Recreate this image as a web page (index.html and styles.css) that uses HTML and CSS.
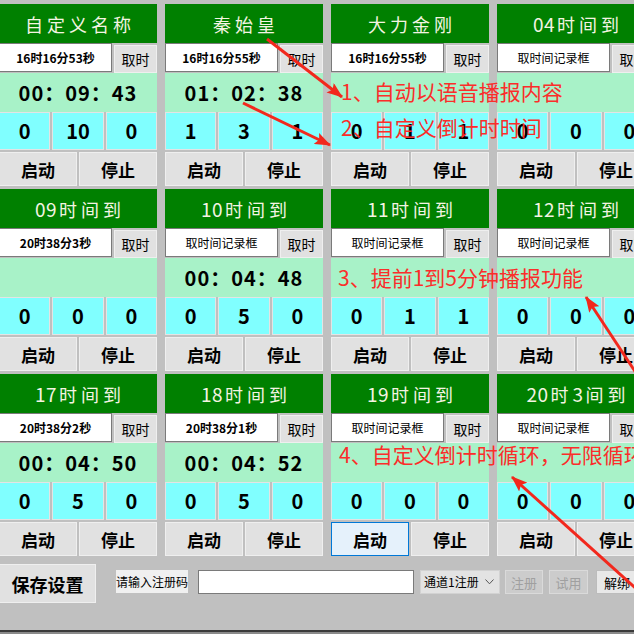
FILE: index.html
```html
<!DOCTYPE html>
<html lang="zh-CN">
<head>
<meta charset="utf-8">
<title>倒计时</title>
<link rel="stylesheet" href="styles.css">
</head>
<body>
<div class="app">
  <div class="grid">
    <div class="panel">
      <div class="hd">自定义名称</div>
      <div class="getrow"><div class="tbox val">16时16分53秒</div><div class="btn get">取时</div></div>
      <div class="time">00：09：43</div>
      <div class="nums"><div class="num">0</div><div class="num">10</div><div class="num">0</div></div>
      <div class="ctrl"><div class="btn">启动</div><div class="btn">停止</div></div>
    </div>
    <div class="panel">
      <div class="hd">秦始皇</div>
      <div class="getrow"><div class="tbox val">16时16分55秒</div><div class="btn get">取时</div></div>
      <div class="time">01：02：38</div>
      <div class="nums"><div class="num">1</div><div class="num">3</div><div class="num">1</div></div>
      <div class="ctrl"><div class="btn">启动</div><div class="btn">停止</div></div>
    </div>
    <div class="panel">
      <div class="hd">大力金刚</div>
      <div class="getrow"><div class="tbox val">16时16分55秒</div><div class="btn get">取时</div></div>
      <div class="time"></div>
      <div class="nums"><div class="num">0</div><div class="num">1</div><div class="num">1</div></div>
      <div class="ctrl"><div class="btn">启动</div><div class="btn">停止</div></div>
    </div>
    <div class="panel">
      <div class="hd"><span class="d">04</span>时间到</div>
      <div class="getrow"><div class="tbox">取时间记录框</div><div class="btn get">取时</div></div>
      <div class="time"></div>
      <div class="nums"><div class="num">0</div><div class="num">0</div><div class="num">0</div></div>
      <div class="ctrl"><div class="btn">启动</div><div class="btn">停止</div></div>
    </div>

    <div class="panel">
      <div class="hd"><span class="d">09</span>时间到</div>
      <div class="getrow"><div class="tbox val">20时38分3秒</div><div class="btn get">取时</div></div>
      <div class="time"></div>
      <div class="nums"><div class="num">0</div><div class="num">0</div><div class="num">0</div></div>
      <div class="ctrl"><div class="btn">启动</div><div class="btn">停止</div></div>
    </div>
    <div class="panel">
      <div class="hd"><span class="d">10</span>时间到</div>
      <div class="getrow"><div class="tbox">取时间记录框</div><div class="btn get">取时</div></div>
      <div class="time">00：04：48</div>
      <div class="nums"><div class="num">0</div><div class="num">5</div><div class="num">0</div></div>
      <div class="ctrl"><div class="btn">启动</div><div class="btn">停止</div></div>
    </div>
    <div class="panel">
      <div class="hd"><span class="d">11</span>时间到</div>
      <div class="getrow"><div class="tbox">取时间记录框</div><div class="btn get">取时</div></div>
      <div class="time"></div>
      <div class="nums"><div class="num">0</div><div class="num">1</div><div class="num">1</div></div>
      <div class="ctrl"><div class="btn">启动</div><div class="btn">停止</div></div>
    </div>
    <div class="panel">
      <div class="hd"><span class="d">12</span>时间到</div>
      <div class="getrow"><div class="tbox">取时间记录框</div><div class="btn get">取时</div></div>
      <div class="time"></div>
      <div class="nums"><div class="num">0</div><div class="num">0</div><div class="num">0</div></div>
      <div class="ctrl"><div class="btn">启动</div><div class="btn">停止</div></div>
    </div>

    <div class="panel">
      <div class="hd"><span class="d">17</span>时间到</div>
      <div class="getrow"><div class="tbox val">20时38分2秒</div><div class="btn get">取时</div></div>
      <div class="time">00：04：50</div>
      <div class="nums"><div class="num">0</div><div class="num">5</div><div class="num">0</div></div>
      <div class="ctrl"><div class="btn">启动</div><div class="btn">停止</div></div>
    </div>
    <div class="panel">
      <div class="hd"><span class="d">18</span>时间到</div>
      <div class="getrow"><div class="tbox val">20时38分1秒</div><div class="btn get">取时</div></div>
      <div class="time">00：04：52</div>
      <div class="nums"><div class="num">0</div><div class="num">5</div><div class="num">0</div></div>
      <div class="ctrl"><div class="btn">启动</div><div class="btn">停止</div></div>
    </div>
    <div class="panel">
      <div class="hd"><span class="d">19</span>时间到</div>
      <div class="getrow"><div class="tbox">取时间记录框</div><div class="btn get">取时</div></div>
      <div class="time"></div>
      <div class="nums"><div class="num">0</div><div class="num">0</div><div class="num">0</div></div>
      <div class="ctrl"><div class="btn focus">启动</div><div class="btn">停止</div></div>
    </div>
    <div class="panel">
      <div class="hd"><span class="d">20</span>时<span class="d">3</span>间到</div>
      <div class="getrow"><div class="tbox">取时间记录框</div><div class="btn get">取时</div></div>
      <div class="time"></div>
      <div class="nums"><div class="num">0</div><div class="num">0</div><div class="num">0</div></div>
      <div class="ctrl"><div class="btn">启动</div><div class="btn">停止</div></div>
    </div>
  </div>

  <div class="bar">
    <div class="btn save">保存设置</div>
    <div class="lbl">请输入注册码</div>
    <div class="reg"></div>
    <div class="sel"><span class="seltxt">通道1注册</span><svg class="chev" width="9" height="6" viewBox="0 0 9 6"><polyline points="0.5,0.5 4.5,4.8 8.5,0.5" fill="none" stroke="#555" stroke-width="1"/></svg></div>
    <div class="sbtn dis b1">注册</div>
    <div class="sbtn dis b2">试用</div>
    <div class="sbtn b3">解绑</div>
  </div>
  <div class="taskbar"></div>

  <div class="note n1">1、自动以语音播报内容</div>
  <div class="note n2">2、自定义倒计时时间</div>
  <div class="note n3">3、提前1到5分钟播报功能</div>
  <div class="note n4">4、自定义倒计时循环，无限循环</div>

  <svg class="arrows" width="634" height="634" viewBox="0 0 634 634">
    <defs>
      <marker id="ah" markerWidth="16" markerHeight="12" refX="15" refY="6" orient="auto" markerUnits="userSpaceOnUse">
        <path d="M0,0 L16,6 L0,12 L3,6 z" fill="#f2281d"/>
      </marker>
    </defs>
    <line x1="267" y1="39" x2="342" y2="97" stroke="#f2281d" stroke-width="3" marker-end="url(#ah)"/>
    <line x1="243" y1="103" x2="330" y2="145" stroke="#f2281d" stroke-width="3" marker-end="url(#ah)"/>
    <line x1="642" y1="382" x2="586" y2="297" stroke="#f2281d" stroke-width="3" marker-end="url(#ah)"/>
    <line x1="652" y1="603" x2="512" y2="477" stroke="#f2281d" stroke-width="3" marker-end="url(#ah)"/>
  </svg>
</div>
</body>
</html>
```

FILE: styles.css
```css
html, body {
  margin: 0;
  padding: 0;
}
body {
  width: 634px;
  height: 634px;
  overflow: hidden;
  background: #c0c0c0;
  font-family: "Noto Sans CJK SC", "Noto Sans", sans-serif;
  color: #000;
}
.app {
  position: relative;
  width: 634px;
  height: 634px;
  overflow: hidden;
}
.grid {
  display: grid;
  grid-template-columns: repeat(4, 158px);
  column-gap: 8px;
  row-gap: 3px;
  padding-top: 4px;
  margin-left: -1px;
  width: 656px;
}
.panel {
  display: flex;
  flex-direction: column;
  height: 182px;
}
.hd {
  height: 39px;
  background: #008000;
  color: #f4f4e2;
  font-size: 18px;
  letter-spacing: 4px;
  padding-left: 4px;
  display: flex;
  align-items: center;
  justify-content: center;
  line-height: 1;
  white-space: nowrap;
}
.hd .d {
  font-size: 19px;
  letter-spacing: 0.5px;
  margin-right: 2px;
}
.getrow {
  height: 30px;
  display: flex;
  gap: 2px;
  align-items: flex-start;
}
.tbox {
  width: 113px;
  height: 29px;
  box-sizing: border-box;
  background: #fff;
  border: 1px solid #7a7a7a;
  font-size: 12px;
  display: flex;
  align-items: center;
  justify-content: center;
  line-height: 1;
}
.tbox.val {
  font-weight: 700;
}
.btn {
  box-sizing: border-box;
  background: #e1e1e1;
  border: 1px solid #efefef;
  display: flex;
  align-items: center;
  justify-content: center;
  line-height: 1;
}
.get {
  width: 43px;
  height: 28px;
  margin-top: 2px;
  font-size: 14px;
}
.time {
  height: 39px;
  background: #a8f2c8;
  display: flex;
  align-items: center;
  justify-content: center;
  font-size: 20px;
  font-weight: 700;
  letter-spacing: 1px;
  line-height: 1;
}
.nums {
  height: 38px;
  display: flex;
  gap: 2px;
}
.num {
  flex: 1;
  box-sizing: border-box;
  background: #80ffff;
  border: 1px solid #e4e4e4;
  display: flex;
  align-items: center;
  justify-content: center;
  font-size: 20px;
  font-weight: 700;
  line-height: 1;
}
.ctrl {
  height: 34px;
  margin-top: 2px;
  display: flex;
  gap: 2px;
}
.ctrl .btn {
  flex: 1;
  font-size: 17px;
  font-weight: 700;
}
.ctrl .btn.focus {
  background: #e5f1fb;
  border-color: #0078d7;
}
.bar {
  height: 74px;
  box-sizing: border-box;
  padding-top: 8px;
  display: flex;
  align-items: flex-start;
}
.save {
  width: 97px;
  height: 39px;
  margin-left: -1px;
  font-size: 18px;
  font-weight: 700;
  flex-shrink: 0;
}
.lbl {
  margin-left: 20px;
  margin-top: 6px;
  width: 72px;
  height: 23px;
  flex-shrink: 0;
  background: #f0f0f0;
  font-size: 12px;
  display: flex;
  align-items: center;
  justify-content: center;
  white-space: nowrap;
  line-height: 1;
}
.reg {
  margin-left: 10px;
  margin-top: 6px;
  width: 216px;
  height: 24px;
  flex-shrink: 0;
  box-sizing: border-box;
  background: #fff;
  border: 1px solid #7a7a7a;
}
.sel {
  margin-left: 6px;
  margin-top: 6px;
  width: 80px;
  height: 24px;
  flex-shrink: 0;
  box-sizing: border-box;
  background: #e3e3e3;
  border: 1px solid #d2d2d2;
  display: flex;
  align-items: center;
  justify-content: space-between;
  padding: 0 5px 0 3px;
  font-size: 12px;
  line-height: 1;
  white-space: nowrap;
}
.seltxt {
  white-space: nowrap;
}
.chev {
  display: block;
  flex-shrink: 0;
}
.sbtn {
  margin-top: 6px;
  height: 24px;
  flex-shrink: 0;
  box-sizing: border-box;
  background: #e1e1e1;
  border: 1px solid #adadad;
  display: flex;
  align-items: center;
  justify-content: center;
  font-size: 13px;
  line-height: 1;
  white-space: nowrap;
}
.sbtn.dis {
  background: #cccccc;
  border-color: #dadada;
  color: #a0a0a0;
}
.b1 {
  margin-left: 5px;
  width: 38px;
}
.b2 {
  margin-left: 6px;
  width: 39px;
}
.b3 {
  margin-left: 8px;
  width: 42px;
  background: #e8e8e8;
  border-color: #bcbcbc;
}
.taskbar {
  height: 4px;
  box-sizing: border-box;
  border-top: 2px solid #3a3a3a;
  background: #8a8a8a;
}
.note {
  position: absolute;
  font-size: 21px;
  line-height: 1;
  color: #fb2d2a;
  white-space: nowrap;
}
.n1 { left: 341px; top: 81px; }
.n2 { left: 341px; top: 117px; }
.n3 { left: 338px; top: 267px; }
.n4 { left: 339px; top: 444px; }
.arrows {
  position: absolute;
  left: 0;
  top: 0;
  pointer-events: none;
}
```
